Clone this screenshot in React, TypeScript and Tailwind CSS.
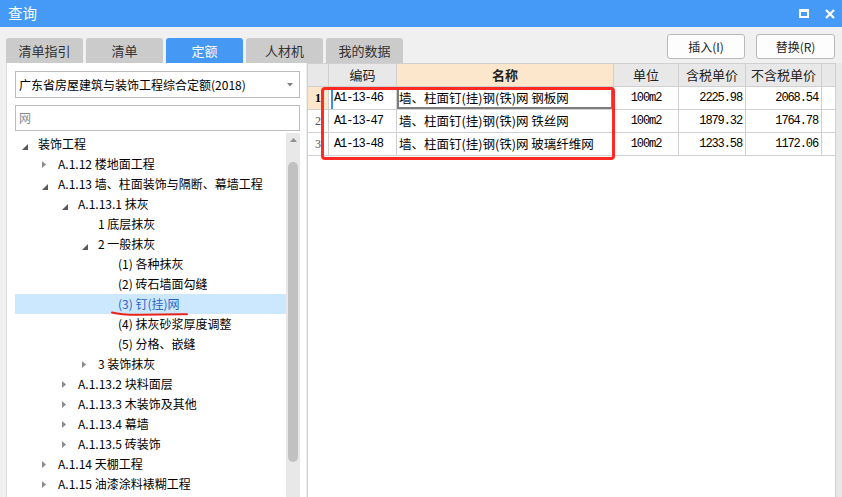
import React from 'react';

type Node = { level: number; text: string; state?: 'open' | 'closed'; selected?: boolean };

const tree: Node[] = [
  { level: 0, text: '装饰工程', state: 'open' },
  { level: 1, text: 'A.1.12 楼地面工程', state: 'closed' },
  { level: 1, text: 'A.1.13 墙、柱面装饰与隔断、幕墙工程', state: 'open' },
  { level: 2, text: 'A.1.13.1 抹灰', state: 'open' },
  { level: 3, text: '1 底层抹灰' },
  { level: 3, text: '2 一般抹灰', state: 'open' },
  { level: 4, text: '(1) 各种抹灰' },
  { level: 4, text: '(2) 砖石墙面勾缝' },
  { level: 4, text: '(3) 钉(挂)网', selected: true },
  { level: 4, text: '(4) 抹灰砂浆厚度调整' },
  { level: 4, text: '(5) 分格、嵌缝' },
  { level: 3, text: '3 装饰抹灰', state: 'closed' },
  { level: 2, text: 'A.1.13.2 块料面层', state: 'closed' },
  { level: 2, text: 'A.1.13.3 木装饰及其他', state: 'closed' },
  { level: 2, text: 'A.1.13.4 幕墙', state: 'closed' },
  { level: 2, text: 'A.1.13.5 砖装饰', state: 'closed' },
  { level: 1, text: 'A.1.14 天棚工程', state: 'closed' },
  { level: 1, text: 'A.1.15 油漆涂料裱糊工程', state: 'closed' },
];

const rows = [
  { code: 'A1-13-46', name: '墙、柱面钉(挂)钢(铁)网 钢板网', unit: '100m2', tax: '2225.98', noTax: '2068.54' },
  { code: 'A1-13-47', name: '墙、柱面钉(挂)钢(铁)网 铁丝网', unit: '100m2', tax: '1879.32', noTax: '1764.78' },
  { code: 'A1-13-48', name: '墙、柱面钉(挂)钢(铁)网 玻璃纤维网', unit: '100m2', tax: '1233.58', noTax: '1172.06' },
];

const tabs = ['清单指引', '清单', '定额', '人材机', '我的数据'];

function Arrow({ state }: { state?: 'open' | 'closed' }) {
  if (state === 'open')
    return (
      <svg width="6" height="6" className="mt-[10px]">
        <path d="M6 0 L6 6 L0 6 Z" fill="#595959" />
      </svg>
    );
  if (state === 'closed')
    return (
      <svg width="4" height="7" className="mt-[7px]">
        <path d="M0 0 L4 3.5 L0 7 Z" fill="#8c8c8c" />
      </svg>
    );
  return null;
}

const mono = "font-['Liberation_Mono',monospace] text-[12px] tracking-[-1.1px]";

export default function App() {
  return (
    <div className="relative flex h-[497px] w-[842px] flex-col overflow-hidden bg-[#f0f0f0] font-['Noto_Sans_CJK_SC',sans-serif] text-[12px] text-black">
      {/* title bar */}
      <div className="flex h-[27px] shrink-0 items-center justify-between bg-[#459af8] pl-[8px] pr-[7px] text-[14.5px] text-white">
        <span className="leading-none">查询</span>
        <div className="flex items-center gap-[16px]">
          <div className="h-[9px] w-[10px] border-2 border-t-[3px] border-white" />
          <svg width="10" height="10" viewBox="0 0 10 10">
            <path d="M1 1 L9 9 M9 1 L1 9" stroke="#fff" strokeWidth="2.2" />
          </svg>
        </div>
      </div>

      {/* tabs + buttons */}
      <div className="flex h-[36px] shrink-0">
        <div className="ml-[6px] flex items-end gap-[3px]">
          {tabs.map((t) => (
            <div
              key={t}
              className={
                'flex h-[25px] w-[77px] items-center justify-center rounded-t-[3px] text-[13px] ' +
                (t === '定额' ? 'bg-[#4599f5] text-white' : 'bg-[#cbcbcb] text-[#333]')
              }
            >
              {t}
            </div>
          ))}
        </div>
        <div className="ml-auto mr-[7px] mt-[7px] flex gap-[11px]">
          <button className="h-[25px] w-[78px] rounded-[3px] border border-[#b9b9b9] bg-[#fdfdfd] text-[12px] text-[#222]">
            插入(I)
          </button>
          <button className="h-[25px] w-[79px] rounded-[3px] border border-[#b9b9b9] bg-[#fdfdfd] text-[12px] text-[#222]">
            替换(R)
          </button>
        </div>
      </div>

      {/* content */}
      <div className="flex min-h-0 flex-1">
        {/* left panel */}
        <div className="relative ml-[6px] flex w-[300px] flex-col border-l border-[#dedede] bg-white pl-[8px] pt-[8px]">
          <div className="flex h-[27px] w-[285px] items-center justify-between border border-[#bdbdbd] bg-white pl-[3px] pr-[6px]">
            <span>广东省房屋建筑与装饰工程综合定额(2018)</span>
            <svg width="6" height="4">
              <path d="M0 0 L6 0 L3 3.5 Z" fill="#808080" />
            </svg>
          </div>
          <div className="mt-[7px] flex h-[26px] w-[285px] items-center border border-[#bdbdbd] bg-white pl-[3px] text-[#8a8a8a]">
            网
          </div>
          <div className="mt-[2px] flex min-h-0 w-[285px] flex-1">
            <div className="w-[271px] pt-[1px]">
              {tree.map((n) => (
                <div
                  key={n.text}
                  className={
                    'flex h-[20px] items-center leading-[20px] ' +
                    (n.selected ? 'bg-[#cce8ff] text-[#2a62c8]' : '')
                  }
                  style={{ paddingLeft: 7 + n.level * 20 }}
                >
                  <div className="flex h-[20px] w-[16px] shrink-0 items-start">
                    <Arrow state={n.state} />
                  </div>
                  <span className="whitespace-nowrap">{n.text}</span>
                </div>
              ))}
            </div>
            <div className="flex w-[14px] flex-col items-center bg-[#e8e8e8] pt-[5px]">
              <svg width="7" height="4">
                <path d="M0 4 L7 4 L3.5 0 Z" fill="#909090" />
              </svg>
              <div className="mt-[20px] h-[300px] w-[10px] rounded-full bg-[#c1c1c1]" />
            </div>
          </div>
          {/* red hand underline */}
          <svg className="absolute left-[103px] top-[247px]" width="80" height="8" viewBox="0 0 80 8">
            <path d="M2 2.5 C 10 4.5, 18 5, 30 4.8 S 60 4.5, 77 4.2" stroke="#e8231c" strokeWidth="2" fill="none" strokeLinecap="round" />
          </svg>
        </div>

        {/* right panel */}
        <div className="ml-[1px] flex w-[528px] flex-col border-l border-[#cfcfcf] bg-white">
          <div className="flex h-[24px] border-b border-t border-[#d0d0d0] bg-[#e8e8e8] text-[13px] text-[#222]">
            <div className="w-[21px] border-r border-[#d0d0d0]" />
            <div className="flex w-[68px] items-center justify-center border-r border-[#d0d0d0]">编码</div>
            <div className="flex w-[217px] items-center justify-center border-r border-[#d0d0d0] bg-[#fde7cc] font-bold">名称</div>
            <div className="flex w-[65px] items-center justify-center border-r border-[#d0d0d0]">单位</div>
            <div className="flex w-[67px] items-center justify-center border-r border-[#d0d0d0]">含税单价</div>
            <div className="flex w-[76px] items-center justify-center border-r border-[#d0d0d0]">不含税单价</div>
          </div>
          {rows.map((r, i) => (
            <div key={r.code} className="flex h-[23px] border-b border-[#d0d0d0]">
              <div
                className={
                  "flex w-[21px] items-center justify-center border-r border-[#d0d0d0] font-['Liberation_Serif',serif] text-[12px] " +
                  (i === 0 ? 'bg-[#fde7cc] font-bold text-black' : 'text-[#555]')
                }
              >
                {i + 1}
              </div>
              <div className={'flex w-[68px] items-center border-r border-[#d0d0d0] pl-[2px] ' + mono}>
                {i === 0 && <div className="mr-[1px] h-full w-[2px] bg-[#3d8be8]" />}
                <span className={i === 0 ? '' : 'pl-[3px]'}>{r.code}</span>
              </div>
              <div
                className={
                  'flex w-[217px] items-center border-r border-[#d0d0d0] pl-[2px] text-[12.5px] ' +
                  (i === 0 ? 'shadow-[inset_0_0_0_2px_#7d7d7d]' : '')
                }
              >
                {r.name}
              </div>
              <div className={'flex w-[65px] items-center justify-center border-r border-[#d0d0d0] ' + mono}>{r.unit}</div>
              <div className={'flex w-[67px] items-center justify-end border-r border-[#d0d0d0] pr-[3px] ' + mono}>{r.tax}</div>
              <div className={'flex w-[76px] items-center justify-end border-r border-[#d0d0d0] pr-[3px] ' + mono}>{r.noTax}</div>
            </div>
          ))}
        </div>

        <div className="w-[7px] border-l border-[#cfcfcf] bg-[#e8e8e8]" />
      </div>

      {/* red annotation box */}
      <div className="absolute left-[321px] top-[87px] h-[73px] w-[294px] rounded-[4px] border-[3px] border-[#ff2a24]" />
    </div>
  );
}
